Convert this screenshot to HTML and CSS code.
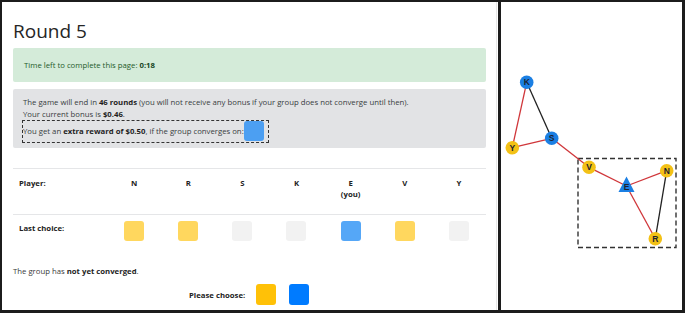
FILE: index.html
```html
<!DOCTYPE html>
<html>
<head>
<meta charset="utf-8">
<link rel="stylesheet" href="styles.css">
</head>
<body>
<div class="frame">
  <div class="left">
    <h1 class="title">Round 5</h1>
    <div class="alert-green">Time left to complete this page: <b>0:18</b></div>
    <div class="alert-gray">
      <div class="line">The game will end in <b>46 rounds</b> (you will not receive any bonus if your group does not converge until then).</div>
      <div class="line">Your current bonus is <b>$0.46</b>.</div>
      <div class="reward">You get an&nbsp;<b>extra reward of $0.50</b>, if the group converges on: <span class="sq sq-reward"></span></div>
    </div>
    <div class="table">
      <div class="row head">
        <div class="label">Player:</div>
        <div class="cell">N</div>
        <div class="cell">R</div>
        <div class="cell">S</div>
        <div class="cell">K</div>
        <div class="cell">E<br>(you)</div>
        <div class="cell">V</div>
        <div class="cell">Y</div>
      </div>
      <div class="row choices">
        <div class="label">Last choice:</div>
        <div class="cell"><span class="sq sq-yellow"></span></div>
        <div class="cell"><span class="sq sq-yellow"></span></div>
        <div class="cell"><span class="sq sq-gray"></span></div>
        <div class="cell"><span class="sq sq-gray"></span></div>
        <div class="cell"><span class="sq sq-blue"></span></div>
        <div class="cell"><span class="sq sq-yellow"></span></div>
        <div class="cell"><span class="sq sq-gray"></span></div>
      </div>
    </div>
    <p class="status">The group has <b>not yet converged</b>.</p>
    <div class="choose">
      <span class="choose-label">Please choose:</span>
      <span class="btn btn-yellow"></span>
      <span class="btn btn-blue"></span>
    </div>
  </div>
  <div class="right">
    <svg class="graph" width="181" height="308" viewBox="0 0 181 308">
      <rect x="77" y="156.5" width="98" height="89" fill="none" stroke="#333" stroke-width="1.4" stroke-dasharray="5,3"/>
      <g stroke-width="1.3">
        <line x1="25.7" y1="80.3" x2="11.3" y2="145.7" stroke="#d0363a"/>
        <line x1="25.7" y1="80.3" x2="50.7" y2="136.3" stroke="#222"/>
        <line x1="11.3" y1="145.7" x2="50.7" y2="136.3" stroke="#d0363a"/>
        <line x1="50.7" y1="136.3" x2="88" y2="165.3" stroke="#d0363a"/>
        <line x1="88" y1="165.3" x2="125.5" y2="184" stroke="#d0363a"/>
        <line x1="125.5" y1="184" x2="165.7" y2="168.7" stroke="#d0363a"/>
        <line x1="125.5" y1="184" x2="154.3" y2="236.7" stroke="#d0363a"/>
        <line x1="165.7" y1="168.7" x2="154.3" y2="236.7" stroke="#222"/>
      </g>
      <g class="nodes">
        <circle cx="25.7" cy="80.3" r="6.8" fill="#1b7fe3"/>
        <circle cx="50.7" cy="136.3" r="6.8" fill="#1b7fe3"/>
        <circle cx="11.3" cy="145.7" r="6.8" fill="#f3c116"/>
        <circle cx="88" cy="165.3" r="6.8" fill="#f3c116"/>
        <polygon points="125.5,174.5 117.5,190 133.5,190" fill="#1b7fe3"/>
        <circle cx="165.7" cy="168.7" r="6.8" fill="#f3c116"/>
        <circle cx="154.3" cy="236.7" r="6.8" fill="#f3c116"/>
      </g>
      <g class="labels">
        <text x="25.7" y="83.3">K</text>
        <text x="50.7" y="139.3">S</text>
        <text x="11.3" y="148.7">Y</text>
        <text x="88" y="168.3">V</text>
        <text x="125.5" y="188">E</text>
        <text x="165.7" y="171.7">N</text>
        <text x="154.3" y="239.7">R</text>
      </g>
    </svg>
  </div>
</div>
</body>
</html>
```

FILE: styles.css
```css
html, body {
  margin: 0;
  padding: 0;
  background: #fff;
}
.frame {
  display: flex;
  width: 685px;
  height: 313px;
  box-sizing: border-box;
  border-top: 2px solid #1c1c1c;
  border-left: 2px solid #1c1c1c;
  border-right: 3px solid #1c1c1c;
  border-bottom: 3px solid #1c1c1c;
  font-family: "Open Sans", "Noto Sans", sans-serif;
  font-size: 7.75px;
  color: #3a3a3a;
}
.left {
  width: 496px;
  box-sizing: border-box;
  padding: 0 10px 0 11px;
  border-right: 1px solid #e6e6e6;
}
.right {
  flex: 1;
  border-left: 3px solid #1c1c1c;
  margin-left: 1px;
  position: relative;
}
.graph {
  display: block;
}
.labels text {
  font-family: "Liberation Sans", Arial, sans-serif;
  font-size: 8.5px;
  font-weight: bold;
  fill: #1d2330;
  text-anchor: middle;
}
.title {
  margin: 0;
  padding-top: 18px;
  height: 28px;
  font-size: 19px;
  line-height: 22px;
  font-weight: 400;
  color: #252525;
}
.alert-green {
  background: #d4ebd9;
  color: #1f5b2b;
  height: 34px;
  box-sizing: border-box;
  padding-left: 11px;
  line-height: 34px;
  border-radius: 2px;
}
.alert-green b {
  color: #16461f;
}
.alert-gray {
  margin-top: 7px;
  background: #e2e3e5;
  padding: 7px 9px 5px 9px;
  border-radius: 2px;
  color: #383d41;
}
.line {
  line-height: 12px;
  padding-left: 1px;
}
b {
  font-weight: 700;
  color: #1e1e1e;
}
.reward {
  display: inline-flex;
  align-items: center;
  border: 1px dashed #333;
  padding: 0 4px 1px 0;
  line-height: 12px;
}
.sq {
  display: inline-block;
  width: 20px;
  height: 20px;
  border-radius: 3px;
}
.sq-reward {
  background: #4c9ff2;
}
.sq-yellow {
  background: #ffd75e;
}
.sq-gray {
  background: #f2f2f2;
}
.sq-blue {
  background: #55a7f7;
}
.table {
  margin-top: 20px;
}
.row {
  display: grid;
  grid-template-columns: 94px repeat(7, 1fr);
  border-top: 1px solid #e5e6e8;
}
.head {
  height: 46px;
  box-sizing: border-box;
  padding-top: 9px;
  line-height: 11px;
  font-weight: 700;
  color: #222;
}
.choices {
  padding-top: 6px;
  height: 30px;
  box-sizing: border-box;
  font-weight: 700;
  color: #222;
}
.label {
  padding-left: 6px;
}
.choices .label {
  line-height: 14px;
}
.cell {
  text-align: center;
}
.status {
  margin: 21px 0 0 0;
  line-height: 12px;
}
.choose {
  display: flex;
  align-items: center;
  margin-top: 7px;
  padding-left: 176px;
  height: 21px;
}
.choose-label {
  font-weight: 700;
  color: #222;
  margin-right: 11px;
}
.btn {
  display: inline-block;
  width: 20px;
  height: 21px;
  border-radius: 3px;
}
.btn-yellow {
  background: #ffc107;
  margin-right: 13px;
}
.btn-blue {
  background: #007bff;
}
```
